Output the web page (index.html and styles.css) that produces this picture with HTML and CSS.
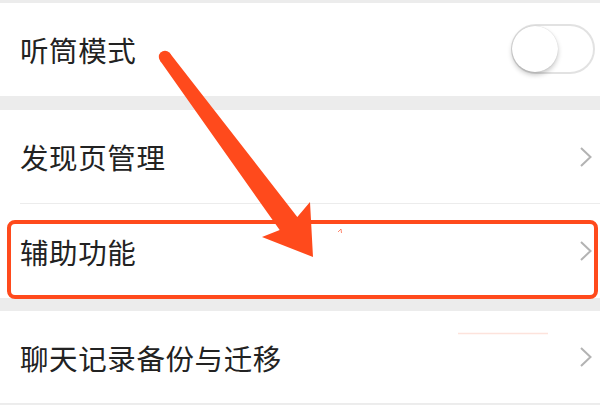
FILE: index.html
```html
<!DOCTYPE html>
<html lang="zh-CN">
<head>
<meta charset="utf-8">
<title>设置</title>
<link rel="stylesheet" href="styles.css">
</head>
<body>
<div class="page">
  <div class="top-strip"></div>
  <div class="group">
    <div class="row">
      <span class="label">听筒模式</span>
      <div class="toggle"><div class="knob"></div></div>
    </div>
  </div>
  <div class="gap gap-a"></div>
  <div class="group">
    <div class="row row-line">
      <span class="label">发现页管理</span>
      <svg class="chev" viewBox="0 0 14 22" width="14" height="22"><path d="M2 2 L11.5 11 L2 20" fill="none" stroke="#b3b3b3" stroke-width="2"/></svg>
    </div>
    <div class="row row-b">
      <span class="label">辅助功能</span>
      <svg class="chev" viewBox="0 0 14 22" width="14" height="22"><path d="M2 2 L11.5 11 L2 20" fill="none" stroke="#b3b3b3" stroke-width="2"/></svg>
    </div>
  </div>
  <div class="gap gap-b"></div>
  <div class="group">
    <div class="row row-c row-bottom">
      <span class="label">聊天记录备份与迁移</span>
      <svg class="chev" viewBox="0 0 14 22" width="14" height="22"><path d="M2 2 L11.5 11 L2 20" fill="none" stroke="#b3b3b3" stroke-width="2"/></svg>
    </div>
  </div>

  <div class="highlight"></div>
  <svg class="arrow" viewBox="0 0 600 405" width="600" height="405">
    <circle cx="165" cy="57" r="6.2" fill="#ff4a1c"/>
    <polygon points="169.9,53.3 297.3,216.9 310,202 313,257 262,237 279.7,230.1 160.1,60.7" fill="#ff4a1c"/>
    <path d="M338 232 L341 229 L341.5 233" fill="none" stroke="#ff6a4a" stroke-width="0.8"/>
    <line x1="458" y1="333.5" x2="548" y2="333.5" stroke="#fde3dc" stroke-width="1.5"/>
  </svg>
</div>
</body>
</html>
```

FILE: styles.css
```css
html, body {
  margin: 0;
  padding: 0;
}
body {
  background: #ededed;
  font-family: "Noto Sans CJK SC", "Noto Sans", sans-serif;
}
.page {
  position: relative;
  width: 600px;
  height: 405px;
  overflow: hidden;
  background: #ededed;
}
.top-strip {
  height: 3px;
  background: #ececec;
}
.group {
  background: #fff;
}
.row {
  height: 93px;
  display: flex;
  align-items: center;
  justify-content: space-between;
  padding-left: 20px;
  padding-right: 7px;
  box-sizing: border-box;
  position: relative;
}
.row-line::after {
  content: "";
  position: absolute;
  left: 20px;
  right: 0;
  bottom: -1px;
  height: 1px;
  background: #ececec;
}
.row-line {
  margin-bottom: 1px;
}
.row-b {
  height: 94px;
}
.row-c {
  height: 93px;
}
.row-bottom {
  border-bottom: 1px solid #ececec;
}
.label {
  font-size: 28.5px;
  line-height: 1;
  color: #222;
  letter-spacing: 0.6px;
  margin-top: 2px;
}
.gap {
  background: #ececec;
}
.gap-a {
  height: 14px;
}
.gap-b {
  height: 13px;
}
.toggle {
  width: 80px;
  height: 46px;
  border: 2px solid #e2e2e2;
  border-radius: 25px;
  background: #fff;
  position: relative;
  margin-right: -2px;
  margin-top: -2px;
}
.knob {
  position: absolute;
  left: -1px;
  top: 0;
  width: 46px;
  height: 46px;
  border-radius: 50%;
  background: #fff;
  box-shadow: 0 3px 5px rgba(0, 0, 0, 0.22), 0 0 1px rgba(0, 0, 0, 0.2);
}
.chev {
  display: block;
  margin-right: 0;
}
.highlight {
  position: absolute;
  left: 7px;
  top: 220px;
  width: 583px;
  height: 71px;
  border: 4px solid #ff4a1c;
  border-radius: 8px;
}
.arrow {
  position: absolute;
  left: 0;
  top: 0;
}
```
